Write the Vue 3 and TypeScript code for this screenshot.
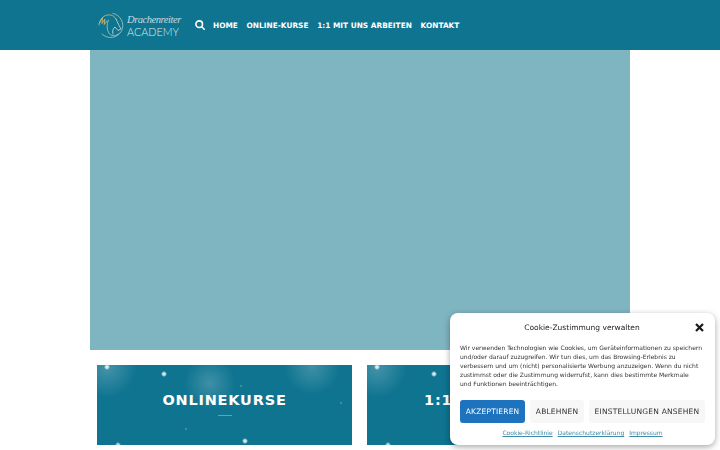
<script setup lang="ts">
// Academy landing page: top bar, empty hero, two teaser cards and the cookie dialog on top.
const NAV = ['Home', 'Online-Kurse', '1:1 mit uns arbeiten', 'Kontakt'];
const CARDS = ['Onlinekurse', '1:1 Betreuung'];
const POLICY_LINKS = ['Cookie-Richtlinie', 'Datenschutzerklärung', 'Impressum'];
</script>

<template>
  <div class="page">
    <header class="topbar">
      <a class="logo" aria-label="Drachenreiter Academy">
        <svg width="27" height="27" viewBox="0 0 27 27" fill="none" stroke-linecap="round" stroke-linejoin="round">
          <path d="M15 1.4 A12.2 12.2 0 1 1 4 22" stroke="#a9c9c4" stroke-width="0.8" />
          <path d="M1 13 C1.5 6.5 7 2 12.5 3 C15 3.4 17 5 18 7" stroke="#cfb46c" stroke-width="0.9" />
          <path d="M1.5 11 L4.5 5.5 L4 11.5 L7 7 L6.2 12.5 L9 9" stroke="#cfb46c" stroke-width="0.9" />
          <path d="M18 7 C19 9 20 11 20.5 12.5 L23 17 L20 18.5 L17 15 C15 16.5 14 19 15 22" stroke="#cfe0d6" stroke-width="0.8" />
          <path d="M10.5 8 C8.5 12.5 8.5 18 11.5 22 C14.5 24.5 18.5 24 21 21.5" stroke="#a9c9c4" stroke-width="0.8" />
        </svg>
        <span class="logo-text">
          <span class="logo-script">Drachenreiter</span>
          <span class="logo-word">ACADEMY</span>
        </span>
      </a>
      <svg class="search" width="10" height="10" viewBox="0 0 10 10" fill="none" stroke="#fff" stroke-width="1.6" stroke-linecap="round">
        <circle cx="4.2" cy="4.2" r="3.3" />
        <path d="M6.8 6.8 L9.2 9.2" />
      </svg>
      <nav class="nav">
        <a v-for="item in NAV" :key="item" class="nav-link">{{ item }}</a>
      </nav>
    </header>

    <div class="hero"></div>

    <section class="cards">
      <div v-for="card in CARDS" :key="card" class="card">
        <h2 class="card-title">{{ card }}</h2>
        <span class="card-line"></span>
      </div>
    </section>

    <aside class="cookie">
      <div class="cookie-head">
        <span class="cookie-title">Cookie-Zustimmung verwalten</span>
        <svg class="cookie-close" width="9" height="9" viewBox="0 0 9 9" stroke="#1a1a1a" stroke-width="2.2">
          <path d="M1 1 L8 8 M8 1 L1 8" />
        </svg>
      </div>
      <p class="cookie-text">
        Wir verwenden Technologien wie Cookies, um Geräteinformationen zu speichern und/oder darauf zuzugreifen. Wir tun dies, um das Browsing-Erlebnis zu verbessern und um (nicht) personalisierte Werbung anzuzeigen. Wenn du nicht zustimmst oder die Zustimmung widerrufst, kann dies bestimmte Merkmale<br />und Funktionen beeinträchtigen.
      </p>
      <div class="cookie-buttons">
        <button class="btn btn-primary">Akzeptieren</button>
        <button class="btn">Ablehnen</button>
        <button class="btn">Einstellungen ansehen</button>
      </div>
      <div class="cookie-links">
        <a v-for="link in POLICY_LINKS" :key="link" class="cookie-link">{{ link }}</a>
      </div>
    </aside>
  </div>
</template>

<style scoped>
.page {
  height: 450px;
  overflow: hidden;
  background: #fff;
  font-family: "DejaVu Sans", sans-serif;
}

.topbar {
  height: 50px;
  padding-left: 98px;
  display: flex;
  align-items: center;
  background: #0e7490;
  box-sizing: border-box;
}

.logo { display: flex; align-items: center; gap: 2px; width: 97px; flex: none; }
.logo-text { display: flex; flex-direction: column; width: 54px; }
.logo-script {
  font-family: "Liberation Serif", serif;
  font-style: italic;
  font-size: 10.5px;
  letter-spacing: -0.45px;
  line-height: 13px;
  color: #c3dce2;
  white-space: nowrap;
}
.logo-word {
  font-family: Lato, sans-serif;
  font-weight: 300;
  font-size: 10.8px;
  line-height: 12px;
  color: #dcebee;
}

.search { flex: none; margin-right: 8px; }

.nav { display: flex; gap: 8.7px; }
.nav-link {
  font-size: 7.4px;
  font-weight: 700;
  text-transform: uppercase;
  color: #fff;
}

.hero {
  width: 540px;
  height: 300px;
  margin: 0 auto;
  background: #7fb4c1;
}

.cards {
  margin: 15px 0 0 97px;
  display: flex;
  gap: 15px;
}

.card {
  width: 255px;
  height: 80px;
  flex: none;
  display: flex;
  flex-direction: column;
  align-items: center;
  padding-top: 26px;
  box-sizing: border-box;
  background:
    radial-gradient(circle 3px at 10px 2px, #dcecef 40%, transparent),
    radial-gradient(circle 3px at 67px 9px, #d5e8ec 40%, transparent),
    radial-gradient(circle 3px at 148px 76px, #d5e8ec 40%, transparent),
    radial-gradient(circle 3px at 21px 80px, #b9d8df 40%, transparent),
    radial-gradient(circle 1px at 144px 21px, #5da3b6 50%, transparent),
    radial-gradient(circle 1px at 244px 38px, #5da3b6 50%, transparent),
    radial-gradient(circle 1px at 89px 64px, #5da3b6 50%, transparent),
    radial-gradient(circle 26px at 113px 18px, rgba(255, 255, 255, 0.2), transparent),
    radial-gradient(circle 28px at 215px 2px, rgba(255, 255, 255, 0.2), transparent),
    radial-gradient(circle 30px at 10px 3px, rgba(255, 255, 255, 0.22), transparent),
    #0e7490;
}

.card-title {
  margin: 0;
  font-size: 14.5px;
  line-height: 18px;
  font-weight: 700;
  letter-spacing: 0.8px;
  text-transform: uppercase;
  color: #fff;
  white-space: nowrap;
}
.card-line {
  width: 14px;
  height: 1px;
  margin-top: 6px;
  background: rgba(255, 255, 255, 0.35);
}

.cookie {
  position: fixed;
  left: 450px;
  top: 313px;
  width: 265px;
  height: 132px;
  padding: 10px;
  box-sizing: border-box;
  background: #fff;
  border-radius: 8px;
  box-shadow: 0 2px 6px rgba(0, 0, 0, 0.35);
  color: #222;
}
.cookie-head {
  display: flex;
  align-items: center;
  justify-content: center;
  position: relative;
  height: 8px;
}
.cookie-title { font-size: 7.5px; padding-right: 1px; }
.cookie-close { position: absolute; right: 1px; top: 0; }
.cookie-text {
  margin: 12px 0 0;
  font-size: 6px;
  line-height: 9px;
  color: #333;
}
.cookie-buttons { display: flex; gap: 5px; margin-top: 12px; }
.btn {
  height: 23px;
  flex: auto;
  padding: 0 5px;
  border: none;
  border-radius: 3px;
  background: #f7f7f7;
  color: #333;
  font-family: inherit;
  font-size: 7.5px;
  letter-spacing: 0.2px;
  text-transform: uppercase;
  white-space: nowrap;
}
.btn-primary { background: #1e73be; color: #fff; }
.cookie-links { display: flex; justify-content: center; gap: 5px; margin-top: 6px; }
.cookie-link { font-size: 6px; color: #3f8aa8; text-decoration: underline; }
</style>
